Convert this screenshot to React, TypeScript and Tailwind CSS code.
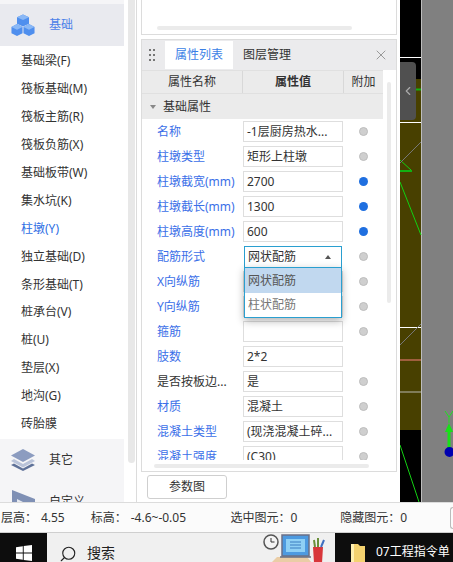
import { Search, X, ChevronLeft } from "lucide-react";

const menuItems = [
  "基础梁(F)",
  "筏板基础(M)",
  "筏板主筋(R)",
  "筏板负筋(X)",
  "基础板带(W)",
  "集水坑(K)",
  "柱墩(Y)",
  "独立基础(D)",
  "条形基础(T)",
  "桩承台(V)",
  "桩(U)",
  "垫层(X)",
  "地沟(G)",
  "砖胎膜",
];

type Row = { name: string; value: string; link?: boolean; dot?: "gray" | "blue"; select?: boolean };

const rows: Row[] = [
  { name: "名称", value: "-1层厨房热水...", link: true, dot: "gray" },
  { name: "柱墩类型", value: "矩形上柱墩", link: true, dot: "gray" },
  { name: "柱墩截宽(mm)", value: "2700", link: true, dot: "blue" },
  { name: "柱墩截长(mm)", value: "1300", link: true, dot: "blue" },
  { name: "柱墩高度(mm)", value: "600", link: true, dot: "blue" },
  { name: "配筋形式", value: "网状配筋", link: true, dot: "gray", select: true },
  { name: "X向纵筋", value: "", link: true, dot: "gray" },
  { name: "Y向纵筋", value: "", link: true, dot: "gray" },
  { name: "箍筋", value: "", link: true, dot: "gray" },
  { name: "肢数", value: "2*2", link: true },
  { name: "是否按板边...", value: "是", dot: "gray" },
  { name: "材质", value: "混凝土", link: true, dot: "gray" },
  { name: "混凝土类型", value: "(现浇混凝土碎...", link: true, dot: "gray" },
  { name: "混凝土强度", value: "(C30)", link: true, dot: "gray" },
];

const CubesIcon = () => (
  <svg width="24" height="23" viewBox="0 0 26 24">
    <path d="M13 0l6.500 3v7L13 13l-6.500-3V3z" fill="#4f8fee" />
    <path d="M13 0l6.500 3L13 6 6.500 3z" fill="#8ab8f6" />
    <path d="M6.500 10.500l6 3v7l-6 3-6-3v-7z" fill="#4f8fee" />
    <path d="M6.500 10.500l6 3-6 3-6-3z" fill="#8ab8f6" />
    <path d="M19.500 10.500l6 3v7l-6 3-6-3v-7z" fill="#4f8fee" />
    <path d="M19.500 10.500l6 3-6 3-6-3z" fill="#8ab8f6" />
  </svg>
);

const LayersIcon = () => (
  <svg width="24" height="22" viewBox="0 0 24 22">
    <path d="M12 0l12 6.500-12 6.500L0 6.500z" fill="#8c9cc0" />
    <path d="M3 10l9 5 9-5 3 2-12 6.500L0 12z" fill="#b9c3d9" />
    <path d="M3 14.500l9 5 9-5 3 1.500-12 6L0 16z" fill="#5f7299" />
  </svg>
);

const CustomIcon = () => (
  <svg width="24" height="24" viewBox="0 0 24 24">
    <path d="M1 0l23 9v15H1z" fill="#7f90b5" />
    <path d="M6 9l12 6-12 7z" fill="#e6eaf2" />
  </svg>
);

const WindowsLogo = () => (
  <svg width="16" height="16" viewBox="0 0 16 16" fill="#fff">
    <path d="M0 2.200L6.800 1.200V7.500H0zM7.700 1.100L16 0V7.500H7.700zM0 8.400H6.800V14.800L0 13.800zM7.700 8.400H16V16L7.700 14.900z" />
  </svg>
);

const TrayArt = () => (
  <svg width="62" height="29" viewBox="0 0 62 29">
    <circle cx="8" cy="8" r="7" fill="#f4f4f4" stroke="#555" strokeWidth="1.500" />
    <path d="M8 4v4h3.500" stroke="#333" strokeWidth="1" fill="none" />
    <path d="M8 29l6-6h30l5 6z" fill="#eacda6" />
    <rect x="19" y="1" width="27" height="21" fill="#4d9ae0" stroke="#6a6f86" strokeWidth="1.500" />
    <rect x="23" y="5" width="19" height="13" fill="#8fd0f5" />
    <path d="M27 8h11M27 11h11M27 14h11" stroke="#3a7cc0" strokeWidth="1" />
    <path d="M17 23h31" stroke="#666c80" strokeWidth="1.500" />
    <path d="M50 13h10l-1 16h-8z" fill="#d8363a" />
    <path d="M52 13l-1-7M55 13V4" stroke="#6a8f3a" strokeWidth="2" />
    <path d="M58 13l3-7" stroke="#3f6fc0" strokeWidth="2" />
  </svg>
);

// the CAD view behind the panels
const CadCanvas = () => (
  <div className="relative h-[502px] w-[53px] shrink-0">
    <svg width="53" height="502" viewBox="0 0 53 502" className="block">
      <rect width="53" height="502" fill="#000" />
      <rect y="79" width="21" height="351" fill="#484000" />
      <rect x="21" width="32" height="502" fill="#808080" />
      <rect x="21" width="1" height="502" fill="#bdbdbd" />
      <path d="M0 57.500h21M0 122.500h21M0 327.500h21" stroke="#fff" strokeWidth="1" />
      <path d="M0 360h21" stroke="#a05f3e" strokeWidth="2" />
      <path d="M0 392h21" stroke="#b8b8b0" strokeWidth="1" />
      <path d="M16 89.500h5M0 171h12" stroke="#12b012" strokeWidth="2" />
      <path d="M0 160L11 170M0 182L21 235M0 445L19 502" stroke="#12d012" strokeWidth="1" />
      <path d="M0 163L21 142M0 345L21 324" stroke="#777" strokeWidth="1" />
      <path d="M45 411l4 6 4-6M49 417v6" stroke="#20e020" strokeWidth="1" fill="none" />
      <path d="M49 423l4 9h-2.500v16h-3v-16H45z" fill="#18e018" />
      <circle cx="49.500" cy="452" r="5" fill="#0000b0" />
    </svg>
    {/* collapse handle */}
    <div className="absolute left-0 top-[62px] flex h-[58px] w-[16px] items-center justify-center rounded-r-[4px] bg-[#505050]">
      <ChevronLeft size={14} className="text-[#aaa]" />
    </div>
  </div>
);

const App = () => {
  return (
    <div className="flex h-[562px] w-[453px] flex-col overflow-hidden bg-white font-['Noto_Sans','Noto_Sans_CJK_SC',sans-serif] text-[12px] text-[#333]">
      <div className="flex h-[502px] shrink-0">
        {/* left menu */}
        <aside className="w-[124px] shrink-0 overflow-hidden">
          <div className="h-[4px] bg-[#f5f5f7]" />
          <div className="flex h-[42px] items-center bg-[#e9eaef] pl-[11px]">
            <CubesIcon />
            <span className="ml-[14px] text-[#4a80e8]">基础</span>
          </div>
          <ul className="pt-[1.500px] pb-[1.500px]">
            {menuItems.map((item) => (
              <li
                key={item}
                className={`flex h-[27.900px] items-center pl-[21px] ${item === "柱墩(Y)" ? "text-[#2f6fe4]" : ""}`}
              >
                {item}
              </li>
            ))}
          </ul>
          <div className="flex h-[42px] items-center bg-[#f5f5f7] pl-[11px]">
            <LayersIcon />
            <span className="ml-[14px]">其它</span>
          </div>
          <div className="flex h-[42px] items-center bg-[#f5f5f7] pl-[11px]">
            <CustomIcon />
            <span className="ml-[14px]">自定义</span>
          </div>
        </aside>
        <div className="ml-[4px] h-[463px] w-[7px] shrink-0 rounded-b-full bg-[#e8e8e8]" />

        {/* property panels */}
        <div className="ml-[1px] flex w-[264px] shrink-0 flex-col border-l border-[#dcdcdc] pl-[4px] pr-[3px]">
          <div className="h-[35px] shrink-0 border-x border-b border-[#dcdcdc] px-[15px] pt-[26px]">
            <div className="h-[4px] w-[195px] rounded-full bg-[#ebebeb]" />
          </div>
          <section className="relative mt-[4px] flex h-[433px] shrink-0 flex-col border border-[#dcdcdc]">
            <div className="flex h-[30px] shrink-0 items-center bg-[#ebebed] pl-[6px]">
              <svg width="8" height="15" viewBox="0 0 8 15" fill="#777">
                <path d="M1 1h2v2H1zM5 1h2v2H5zM1 6h2v2H1zM5 6h2v2H5zM1 11h2v2H1zM5 11h2v2H5z" />
              </svg>
              <div className="ml-[9px] flex h-[28px] w-[68px] items-center justify-center bg-white text-[#3b7fe6]">
                属性列表
              </div>
              <div className="ml-[10px] text-[#333]">图层管理</div>
              <X size={16} className="ml-auto mr-[7px] text-[#999]" strokeWidth={1.500} />
            </div>

            <div className="relative min-h-0 flex-1">
              <div className="h-[390px] w-[241px] overflow-hidden">
                <div className="flex h-[24px] border-y border-[#e0e0e0] bg-[#ebebeb]">
                  <div className="flex w-[101px] items-center justify-center border-r border-[#d8d8d8]">属性名称</div>
                  <div className="flex w-[101px] items-center justify-center border-r border-[#d8d8d8] font-bold">属性值</div>
                  <div className="flex flex-1 items-center justify-center">附加</div>
                </div>
                <div className="flex h-[25px] items-center bg-[#ebebeb] pl-[8px]">
                  <span className="h-0 w-0 border-x-[3px] border-t-[4px] border-x-transparent border-t-[#888]" />
                  <span className="ml-[7px]">基础属性</span>
                </div>
                {rows.map((row) => (
                  <div key={row.name} className="relative flex h-[25px] items-center">
                    <div className={`w-[101px] shrink-0 pl-[15px] ${row.link ? "text-[#3b6fe8]" : ""}`}>{row.name}</div>
                    {row.select ? (
                      <div className="ml-[1px] mr-[1px] flex h-[22px] w-[98px] shrink-0 items-center border border-[#2a9fd0] pl-[3px]">
                        {row.value}
                        <span className="ml-auto mr-[10px] h-0 w-0 border-x-[3px] border-b-[4px] border-x-transparent border-b-[#555]" />
                      </div>
                    ) : (
                      <div className="flex h-[21px] w-[100px] shrink-0 items-center border border-[#dedede] pl-[3px]">
                        {row.value}
                      </div>
                    )}
                    <div className="flex flex-1 justify-center pl-[1px]">
                      {row.dot === "gray" && <span className="h-[9px] w-[9px] rounded-full border border-[#bdbdbd] bg-[#cfcfcf]" />}
                      {row.dot === "blue" && <span className="h-[9px] w-[9px] rounded-full bg-[#1f6fe0]" />}
                    </div>
                    {row.select && (
                      <div className="absolute left-[102px] top-[23px] z-10 w-[98px] border border-[#2a9fd0] bg-white shadow-[0_3px_8px_rgba(0,0,0,0.3)]">
                        <div className="flex h-[25px] items-center bg-[#c1d8ef] pl-[3px] text-[#555]">网状配筋</div>
                        <div className="flex h-[24px] items-center pl-[3px] text-[#777]">柱状配筋</div>
                      </div>
                    )}
                  </div>
                ))}
              </div>
              <div className="absolute left-[245px] top-[12px] h-[221px] w-[4px] rounded-full bg-[#ebebeb]" />
              <div className="ml-[12px] mt-[4px] h-[4px] w-[215px] rounded-full bg-[#ebebeb]" />
            </div>
          </section>
          <div className="pl-[6px] pt-[3px]">
            <button type="button" className="h-[24px] w-[80px] rounded-[3px] border border-[#cfcfcf] bg-white text-[12px]">
              参数图
            </button>
          </div>
        </div>

        <CadCanvas />
      </div>

      {/* status bar */}
      <footer className="flex h-[30px] shrink-0 items-center border-t border-[#dcdcdc] bg-[#fbfbfb] pl-[1px]">
        <span className="w-[40px]">层高：</span>
        <span className="w-[50px]">4.55</span>
        <span className="w-[40px]">标高：</span>
        <span className="w-[100px]">-4.6~-0.05</span>
        <span className="w-[110px]">选中图元：0</span>
        <span className="w-[110px]">隐藏图元：0</span>
        <span className="h-[22px] w-[3px] rounded-l-[3px] border-y border-l border-[#bbb]" />
      </footer>

      {/* windows taskbar, cut by the bottom of the crop */}
      <div className="flex h-[30px] shrink-0 border-t border-[#cfcfcf]">
        <div className="flex w-[47px] shrink-0 justify-center bg-[#0d0d0d] pl-[1px] pt-[12px]">
          <WindowsLogo />
        </div>
        <div className="flex w-[288px] shrink-0 overflow-hidden bg-[#f0f0f0] pl-[12px]">
          <Search size={18} strokeWidth={1.500} className="mt-[12px] -scale-x-100 text-[#222]" />
          <span className="ml-[10px] mt-[10px] text-[14px] leading-[20px] text-[#222]">搜索</span>
          <div className="ml-auto mr-[10px] pt-[1px]">
            <TrayArt />
          </div>
        </div>
        <div className="flex flex-1 bg-[#0d0d0d] pl-[16px] pt-[10px] text-white">
          <svg width="14" height="19" viewBox="0 0 14 19">
            <path d="M0 1h7l2 2h5v16H0z" fill="#f4d26f" />
            <path d="M0 1h3v18H0z" fill="#fff0b0" />
          </svg>
          <span className="ml-[11px] whitespace-nowrap leading-[18px]">07工程指令单</span>
        </div>
      </div>
    </div>
  );
};

export default App;
